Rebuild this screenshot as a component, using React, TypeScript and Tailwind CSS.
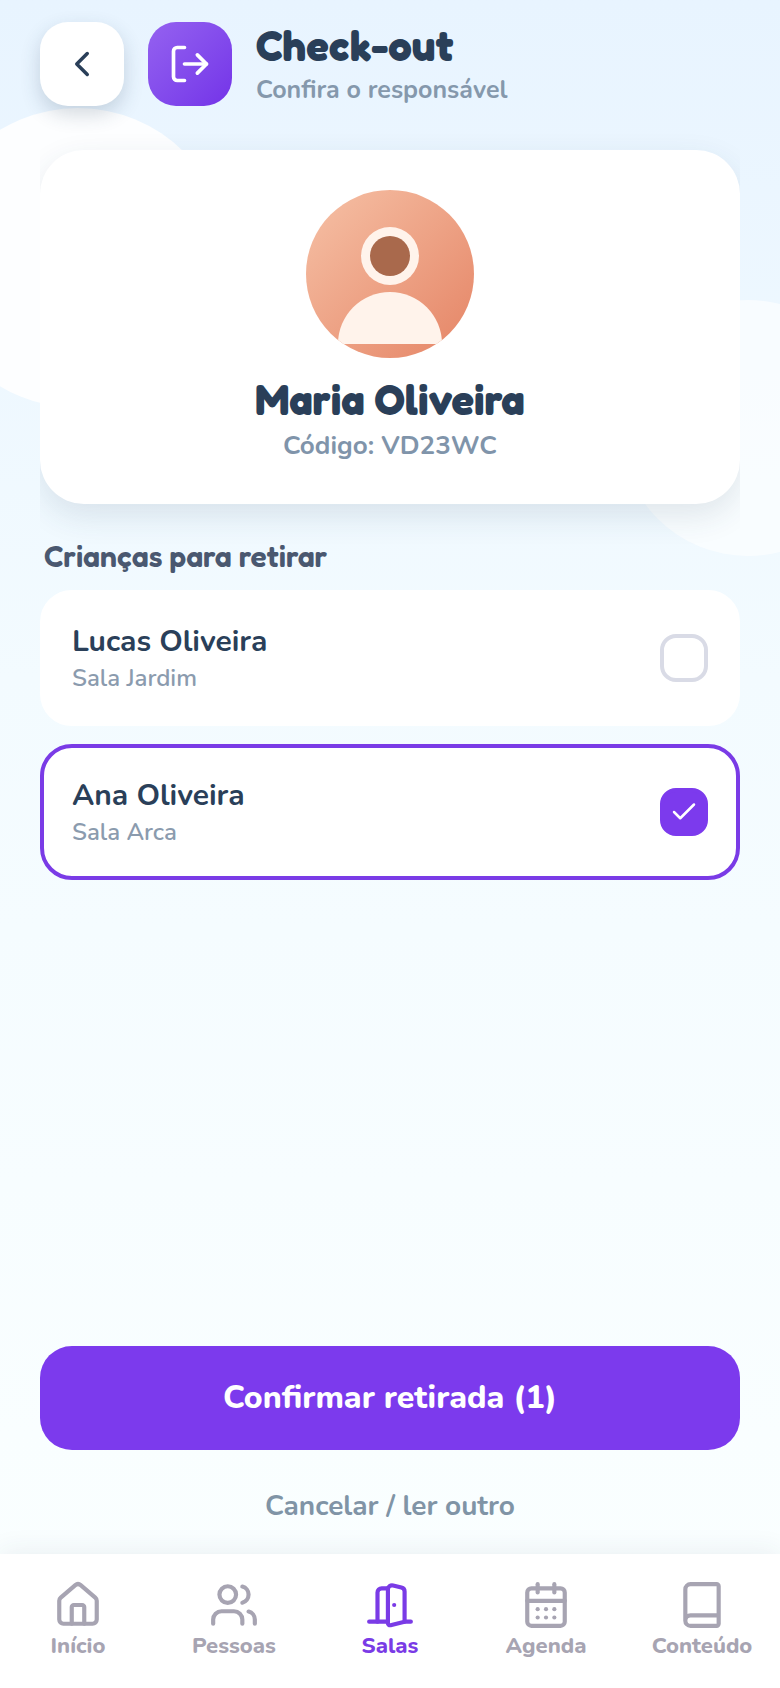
import React, { useState } from "react";
import {
  Book,
  CalendarDays,
  Check,
  ChevronLeft,
  DoorOpen,
  House,
  LogOut,
  Users,
} from "lucide-react";

interface Child {
  id: string;
  name: string;
  room: string;
}

const childrenList: Child[] = [
  { id: "lucas", name: "Lucas Oliveira", room: "Sala Jardim" },
  { id: "ana", name: "Ana Oliveira", room: "Sala Arca" },
];

const displayFont = "font-['Fredoka','Baloo_2','Nunito','Lato',sans-serif]";

const Avatar = () => (
  <svg viewBox="0 0 168 168" className="size-42">
    <defs>
      <linearGradient id="skin" x1="0" y1="0" x2="1" y2="1">
        <stop offset="0" stopColor="#f6c1a6" />
        <stop offset="1" stopColor="#e58465" />
      </linearGradient>
      <clipPath id="round">
        <circle cx="84" cy="84" r="84" />
      </clipPath>
    </defs>
    <g clipPath="url(#round)">
      <rect width="168" height="168" fill="url(#skin)" />
      <path d="M32 154a52 52 0 0 1 104 0Z" fill="#fff3eb" />
      <circle cx="84" cy="66" r="29" fill="#fff3eb" />
      <circle cx="84" cy="66" r="20" fill="#a9694c" />
    </g>
  </svg>
);

const tabs = [
  { label: "Início", icon: <House size={50} /> },
  { label: "Pessoas", icon: <Users size={50} /> },
  { label: "Salas", icon: <DoorOpen size={50} /> },
  { label: "Agenda", icon: <CalendarDays size={50} /> },
  { label: "Conteúdo", icon: <Book size={50} /> },
];

export default function App() {
  const [selected, setSelected] = useState<string[]>(["ana"]);

  const toggleChild = (id: string) => {
    setSelected((prev) =>
      prev.includes(id) ? prev.filter((item) => item !== id) : [...prev, id],
    );
  };

  return (
    <div className="relative isolate flex min-h-screen flex-col overflow-hidden bg-linear-to-b from-[#e8f4ff] via-[#f3fbff] via-40% to-[#fbffff] font-['Nunito','Open_Sans',sans-serif] text-[#2a3f59]">
      {/* background clouds */}
      <div className="absolute -left-18 top-[108px] -z-10 h-[300px] w-[300px] rounded-full bg-white/90" />
      <div className="absolute -right-24 top-[300px] -z-10 h-64 w-64 rounded-full bg-white/60" />

      <header className="flex items-center gap-6 px-10 pt-[22px]">
        <button
          aria-label="Voltar"
          className="flex size-21 items-center justify-center rounded-[28px] bg-white shadow-[0_8px_20px_rgba(42,63,89,0.2)]"
        >
          <ChevronLeft size={42} />
        </button>
        <div className="flex size-21 items-center justify-center rounded-[28px] bg-linear-to-br from-[#9561f0] to-[#7432e8] text-white">
          <LogOut size={44} />
        </div>
        <div>
          <h1 className={`${displayFont} text-[42px] leading-12 font-black`}>
            Check-out
          </h1>
          <p className="mt-1 text-[25px] leading-8 font-bold text-[#8598ac]">
            Confira o responsável
          </p>
        </div>
      </header>

      <main className="flex flex-1 flex-col px-10 pt-11">
        <div className="overflow-x-clip">
          <section className="flex flex-col items-center rounded-[44px] bg-white pt-10 pb-10 shadow-[0_12px_32px_rgba(42,63,89,0.12)]">
            <Avatar />
            <h2
              className={`${displayFont} mt-[18px] text-[42px] leading-12 font-black`}
            >
              Maria Oliveira
            </h2>
            <p className="mt-1 text-[26px] leading-9 font-bold text-[#8094aa]">
              Código: VD23WC
            </p>
          </section>
        </div>

        <h3
          className={`${displayFont} mt-8 px-1 text-[30px] leading-10 font-semibold text-[#4a5870]`}
        >
          Crianças para retirar
        </h3>

        <div className="mt-3.5 flex flex-col gap-[18px]">
          {childrenList.map((child) => {
            const checked = selected.includes(child.id);
            return (
              <label
                key={child.id}
                className={
                  "flex h-34 items-center justify-between rounded-[32px] border-4 bg-white px-7 " +
                  (checked ? "border-[#7a3be6]" : "border-white")
                }
              >
                <span className="flex flex-col">
                  <span className="text-[30px] leading-10 font-bold">
                    {child.name}
                  </span>
                  <span className="text-2xl leading-8 font-semibold text-[#8b9bae]">
                    {child.room}
                  </span>
                </span>
                <span className="relative flex size-12">
                  <input
                    type="checkbox"
                    checked={checked}
                    onChange={() => toggleChild(child.id)}
                    className="size-12 appearance-none rounded-2xl border-4 border-[#d9dbe6] checked:border-[#7c3aed] checked:bg-[#7c3aed]"
                  />
                  {checked && (
                    <Check
                      size={30}
                      className="pointer-events-none absolute inset-[9px] text-white"
                    />
                  )}
                </span>
              </label>
            );
          })}
        </div>

        <div className="mt-auto flex flex-col gap-5 pb-3">
          <button className="h-26 rounded-[32px] bg-[#7c3aed] text-[32px] font-extrabold text-white">
            Confirmar retirada ({selected.length})
          </button>
          <button className="h-18 text-[28px] font-bold text-[#8094a6]">
            Cancelar / ler outro
          </button>
        </div>
      </main>

      <nav className="flex bg-white pt-[26px] pb-[26px] shadow-[0_-4px_24px_rgba(42,63,89,0.07)]">
        {tabs.map((tab) => (
          <a
            key={tab.label}
            href="#"
            className={
              "flex flex-1 flex-col items-center text-[22px] leading-8 font-extrabold " +
              (tab.label === "Salas" ? "text-[#7a3be6]" : "text-[#a7a4b2]")
            }
          >
            {tab.icon}
            {tab.label}
          </a>
        ))}
      </nav>
    </div>
  );
}
